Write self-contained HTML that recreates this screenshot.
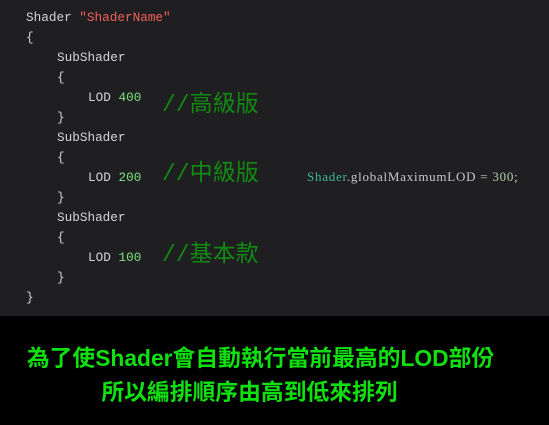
<!DOCTYPE html><html><head><meta charset="utf-8"><style>
body{margin:0;width:549px;height:425px;background:#000;overflow:hidden;position:relative}
.code{position:absolute;left:0;top:0;width:549px;height:316px;background:#1f1f22}
.l{position:absolute;font:12.7px "Liberation Mono","DejaVu Sans Mono",monospace;color:#d4d4d4;white-space:pre;line-height:20px}
.s{color:#f0605a}.n{color:#7ee07e}
.c{position:absolute;font:23px "Liberation Sans","Noto Sans CJK TC",sans-serif;color:#118a11;line-height:26px;white-space:nowrap}
.c i{font:23px "Liberation Mono",monospace;font-style:normal}
.g{position:absolute;font:13px "Liberation Serif","Noto Serif CJK SC",serif;line-height:20px;color:#c8c8c8;white-space:pre;letter-spacing:0.75px}
.b{position:absolute;left:0;width:549px;text-align:center;font:bold 22.8px "Liberation Sans","Noto Sans CJK TC",sans-serif;color:#10e010;white-space:nowrap}
</style></head><body><div class="code">
<div class="l" style="left:26px;top:8px">Shader <span class="s">"ShaderName"</span></div>
<div class="l" style="left:26px;top:28px">{</div>
<div class="l" style="left:57px;top:48px">SubShader</div>
<div class="l" style="left:57px;top:68px">{</div>
<div class="l" style="left:88px;top:88px">LOD <span class="n">400</span></div>
<div class="l" style="left:57px;top:108px">}</div>
<div class="l" style="left:57px;top:128px">SubShader</div>
<div class="l" style="left:57px;top:148px">{</div>
<div class="l" style="left:88px;top:168px">LOD <span class="n">200</span></div>
<div class="l" style="left:57px;top:188px">}</div>
<div class="l" style="left:57px;top:208px">SubShader</div>
<div class="l" style="left:57px;top:228px">{</div>
<div class="l" style="left:88px;top:248px">LOD <span class="n">100</span></div>
<div class="l" style="left:57px;top:268px">}</div>
<div class="l" style="left:26px;top:288px">}</div>
<div class="c" style="left:162px;top:90px"><i>//</i>高級版</div>
<div class="c" style="left:162px;top:159px"><i>//</i>中級版</div>
<div class="c" style="left:162px;top:240px"><i>//</i>基本款</div>
<div class="g" style="left:307px;top:167px"><span style="color:#3cb89a">Shader</span>.globalMaximumLOD = <span style="color:#b5cea8">300</span>;</div>
</div>
<div class="b" style="top:340px;left:-14px">為了使Shader會自動執行當前最高的LOD部份</div>
<div class="b" style="top:374px;left:-25px">所以編排順序由高到低來排列</div>
</body></html>
